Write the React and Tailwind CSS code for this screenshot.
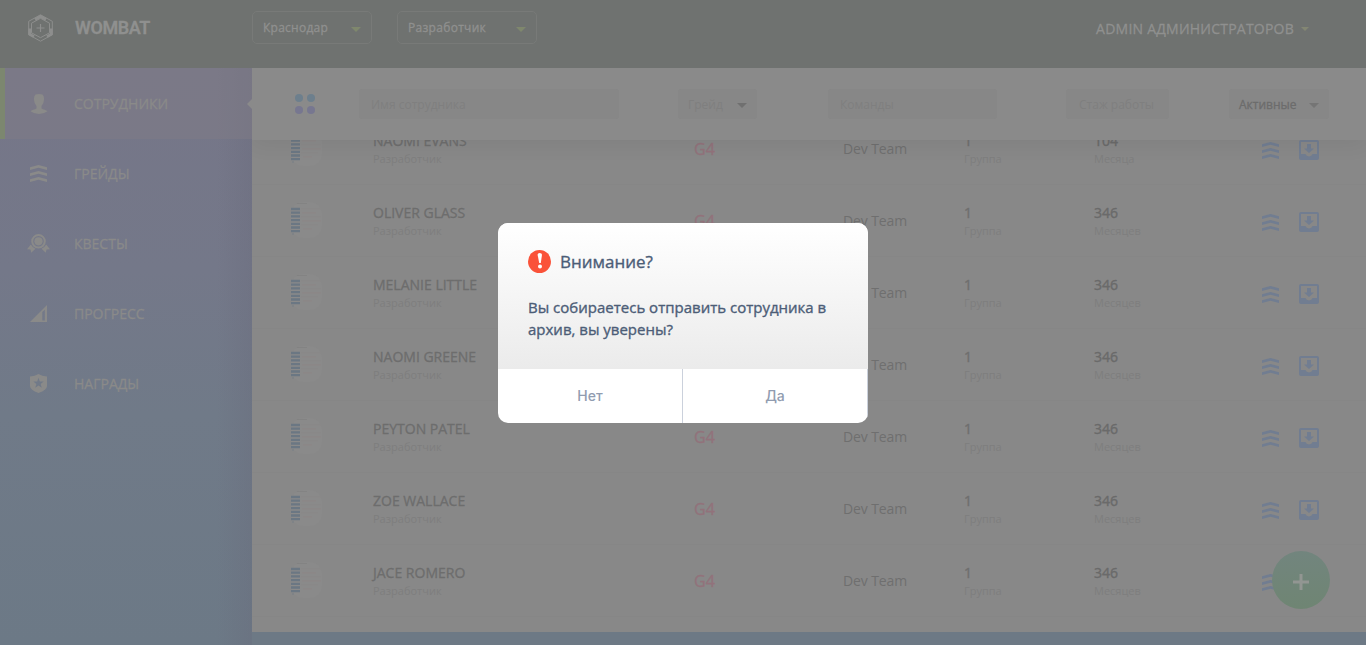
import React from "react";

const people = [
  ["NAOMI EVANS", "104", "Месяца"],
  ["OLIVER GLASS", "346", "Месяцев"],
  ["MELANIE LITTLE", "346", "Месяцев"],
  ["NAOMI GREENE", "346", "Месяцев"],
  ["PEYTON PATEL", "346", "Месяцев"],
  ["ZOE WALLACE", "346", "Месяцев"],
  ["JACE ROMERO", "346", "Месяцев"],
];

const Caret = ({ className }) => (
  <svg viewBox="0 0 10 5" className={className} fill="currentColor"><path d="M0 0h10L5 5z" /></svg>
);

const Chevrons = ({ className }) => (
  <svg width="17" height="17" viewBox="0 0 17 17" className={className} fill="currentColor">
    <path d="M0 2.300 8.500 0 17 2.300V5L8.500 2.700 0 5zM0 8.300 8.500 6 17 8.300V11L8.500 8.700 0 11zM0 14.300 8.500 12l8.500 2.300V17l-8.500-2.300L0 17z" />
  </svg>
);

const Inbox = () => (
  <svg width="20" height="20" viewBox="0 0 20 20" fill="currentColor" fillRule="evenodd">
    <path d="M2 0h16a2 2 0 0 1 2 2v16a2 2 0 0 1-2 2H2a2 2 0 0 1-2-2V2a2 2 0 0 1 2-2zm0 2v12h4.500a3.600 3.200 0 0 0 7 0H18V2zM8 4h4v4.500h3L10 13 5 8.500h3z" />
  </svg>
);

const Logo = () => (
  <svg width="26" height="28" viewBox="0 0 26 28" fill="none" stroke="#8d8e8d">
    <path d="M13.500 .8 25.300 7.300v13.400l-11.800 6.500-11.800-6.500V7.300z" strokeWidth="1" />
    <path d="M13.500 4.300 22.500 9.200v9.600l-9 4.900-9-4.900V9.200z" strokeWidth="1" />
    <path d="M8 5.400 13.500 2.400l5.500 3M2.700 14.500v5.700L7 22.600M24.300 14.500v5.700L20 22.600" strokeWidth="2.800" />
    <path d="M13.500 10v8M9.500 14h8" strokeWidth="1.200" />
  </svg>
);

const Person = () => (
  <svg width="18" height="20" viewBox="0 0 18 20" fill="currentColor">
    <path d="M5.500 0.500Q9-.5 12.500.5 14.300 2 14 5.500q0 4-2.500 6.500v2.500c1.500 1.400 5 1.200 6 2.800Q14 20 9 20T.5 17.300c1-1.600 4.500-1.400 6-2.800V12Q4 9.500 4 5.500 3.700 2 5.500.5z" />
  </svg>
);

const Medal = () => (
  <svg width="23" height="19" viewBox="0 0 23 19" fill="currentColor">
    <path fillRule="evenodd" d="M11.500 0a7.300 7.300 0 1 1 0 14.600 7.300 7.300 0 0 1 0-14.600zm0 2a5.300 5.300 0 1 0 0 10.600 5.300 5.300 0 0 0 0-10.600z" />
    <circle cx="11.500" cy="7.300" r="4.100" />
    <path d="M3.800 10.500 0 15.300l3.500.2.700 3.300 4.300-4Q5.500 13.500 3.800 10.500zM19.200 10.500l3.800 4.800-3.500.2-.7 3.300-4.300-4q3-1.300 4.700-4.300z" />
  </svg>
);

const Progress = () => (
  <svg width="17" height="17" viewBox="0 0 17 17" fill="currentColor" fillRule="evenodd">
    <path d="M0 17 17 0v17zM12.300 7v8.500h2.500V4.800z" />
  </svg>
);

const Shield = () => (
  <svg width="17" height="19" viewBox="0 0 17 19" fill="currentColor" fillRule="evenodd">
    <path d="M8.500 0Q12 2.300 17 2.500V12q0 4-8.500 7Q0 16 0 12V2.500Q5 2.300 8.500 0zm0 3.800L7.200 7.500H3.300l3.100 2.400-1.200 3.900 3.300-2.400 3.300 2.400-1.200-3.900 3.100-2.400H9.800z" />
  </svg>
);

const Avatar = () => (
  <svg width="34" height="38" viewBox="0 0 34 38" className="-mt-px">
    <rect x="0" y="1" width="31" height="36" rx="12" fill="#8a8a8a" />
    <path d="M6 2.500h10" stroke="#808080" strokeWidth=".7" />
    <path d="M10 8h20M10 16h20M10 24h17" stroke="#898787" strokeWidth="1" />
    <path d="M11 12h14M11 20h19M12 28h9" stroke="#8c8585" strokeWidth="1" />
    <path d="M0 8h9M0 11.700h9M0 15.400h9M0 19.100h9M0 22.800h9M0 26.500h9M0 30.200h9" stroke="#6b7783" strokeWidth="2.300" />
    <path d="M1 33h2" stroke="#777f86" strokeWidth="1" />
  </svg>
);

const menu = [
  ["СОТРУДНИКИ", <Person />],
  ["ГРЕЙДЫ", <Chevrons />],
  ["КВЕСТЫ", <Medal />],
  ["ПРОГРЕСС", <Progress />],
  ["НАГРАДЫ", <Shield />],
];

function Header() {
  return (
    <header className="flex h-[68px] shrink-0 items-start bg-[#6f7270] text-[#8f908f] [-webkit-text-stroke:0.3px]">
      <div className="flex w-[252px] items-center pt-[14px] pl-[27px]">
        <Logo />
        <span className="ml-[22px] font-[Roboto] text-[18px] leading-7 font-semibold tracking-[-0.4px]">WOMBAT</span>
      </div>
      <div className="mt-[11px] flex h-[33px] w-[120px] items-center justify-between rounded-[5px] border border-[#787a78] pr-[10px] pl-[10px] text-[12px] tracking-[0.25px]">
        Краснодар<Caret className="mt-1 h-[5px] w-[10px] text-[#7f876d]" />
      </div>
      <div className="mt-[11px] ml-[25px] flex h-[33px] w-[140px] items-center justify-between rounded-[5px] border border-[#787a78] pr-[10px] pl-[10px] text-[12px] tracking-[0.3px]">
        Разработчик<Caret className="mt-1 h-[5px] w-[10px] text-[#7f876d]" />
      </div>
      <div className="mt-[19px] mr-[57px] ml-auto flex items-center text-[14px] leading-5 tracking-[0.23px]">
        ADMIN АДМИНИСТРАТОРОВ<Caret className="ml-[7px] h-1 w-2 text-[#838673]" />
      </div>
    </header>
  );
}

function Sidebar() {
  return (
    <nav className="flex w-[252px] shrink-0 flex-col bg-[linear-gradient(90deg,transparent_86%,#68697a55),linear-gradient(#767688,#747889_35%,#707a88_60%,#6c7986)] text-[#8a8a89]">
      {menu.map(([name, icon], i) => (
        <div
          key={name}
          className={
            i === 0
              ? "-mb-px flex h-[71px] shrink-0 items-center border-l-[5px] border-[#7c876f] bg-[#7f7c8680] pl-[22px]"
              : "flex h-[70px] shrink-0 items-center pl-[27px]"
          }
        >
          <span className="flex w-[23px] justify-center">{icon}</span>
          <span className="ml-6 text-[14px] [-webkit-text-stroke:0.3px]">{name}</span>
          {i === 0 && <svg width="5" height="10" viewBox="0 0 5 10" className="ml-auto"><path d="M5 0v10L0 5z" fill="#8a8a8a" /></svg>}
        </div>
      ))}
    </nav>
  );
}

function Filters() {
  const box = "flex h-[30px] items-center rounded-[3px] bg-[#878787] text-[12px] text-[#7f7f7f]";
  return (
    <div className="relative flex h-[72px] shrink-0 items-center bg-[#8a8a8a] pl-[43px] shadow-[0_4px_20px_#00000010]">
      <div className="grid grid-cols-2 gap-1">
        <i className="size-2 rounded-full bg-[#6d7f8d]" /><i className="size-2 rounded-full bg-[#6d7f8d]" />
        <i className="size-2 rounded-full bg-[#777790]" /><i className="size-2 rounded-full bg-[#777790]" />
      </div>
      <div className={`${box} ml-[44px] w-[260px] pt-0.5 pl-3`}>Имя сотрудника</div>
      <div className={`${box} ml-[59px] w-[79px] justify-between px-[10px] pt-0.5`}>
        Грейд<Caret className="h-[5px] w-[10px] text-[#707070]" />
      </div>
      <div className={`${box} ml-[71px] w-[169px] pt-0.5 pl-3`}>Команды</div>
      <div className={`${box} ml-[69px] w-[103px] pt-0.5 pl-[13px]`}>Стаж работы</div>
      <div className={`${box} ml-[60px] w-[100px] justify-between px-[10px] pt-0.5 text-[#6c6c6c]! [-webkit-text-stroke:0.3px]`}>
        Активные<Caret className="h-[5px] w-[10px] text-[#757575]" />
      </div>
    </div>
  );
}

function Row({ person: [name, months, unit] }) {
  return (
    <div className="grid h-[72px] shrink-0 grid-cols-[82px_321px_149px_121px_130px_168px_37px_30px] items-center border-b border-[#868686] pl-[39px] text-[14px] text-[#6f6f6f]">
      <Avatar />
      <div>
        <div className="leading-5 text-[#6d6d6d] [-webkit-text-stroke:0.3px]">{name}</div>
        <div className="text-[11px] leading-4 text-[#7e7e7e]">Разработчик</div>
      </div>
      <div className="text-[16px] leading-5 text-[#92727b] [-webkit-text-stroke:0.3px]">G4</div>
      <div className="tracking-[-0.1px]">Dev Team</div>
      <div>
        <div className="leading-5 [-webkit-text-stroke:0.4px]">1</div>
        <div className="text-[11px] leading-4 text-[#7e7e7e]">Группа</div>
      </div>
      <div>
        <div className="leading-5 text-[#6a6a6a] [-webkit-text-stroke:0.4px]">{months}</div>
        <div className="text-[11px] leading-4 text-[#7e7e7e]">{unit}</div>
      </div>
      <div className="text-[#717d91]"><Chevrons className="mt-1" /></div>
      <div className="mt-0.5 text-[#717d91]"><Inbox /></div>
    </div>
  );
}

function Dialog() {
  return (
    <div className="absolute top-[223px] left-[498px] flex h-[200px] w-[370px] flex-col overflow-hidden rounded-[10px] bg-white text-[#4c5d77]">
      <div className="h-[146px] bg-linear-to-b from-white to-[#ebebeb] px-[30px] pt-[27px] [-webkit-text-stroke:0.35px]">
        <div className="flex h-[23px] items-center">
          <svg width="23" height="23" viewBox="0 0 23 23">
            <circle cx="11.500" cy="11.500" r="11.500" fill="#fa5239" />
            <path d="M9.600 4.800q0-1.500 2-1.800 2.500 0 2.400 1.800l-1.200 8.100h-1.600z" fill="#fff" />
            <circle cx="12" cy="16.500" r="2" fill="#fff" />
          </svg>
          <span className="ml-[9px] text-[17px]">Внимание?</span>
        </div>
        <p className="mt-[23px] text-[15px] leading-[22px] whitespace-nowrap">
          Вы собираетесь отправить сотрудника в<br />архив, вы уверены?
        </p>
      </div>
      <div className="grid flex-1 grid-cols-2 font-['Inter'] text-[14px] font-medium text-[#919cb0]">
        <button className="border-r border-[#cbd1dc] pb-0.5">Нет</button>
        <button className="border-r border-[#cbd1dc] pb-0.5">Да</button>
      </div>
    </div>
  );
}

export default function App() {
  return (
    <div className="relative flex h-[645px] w-[1366px] flex-col overflow-hidden bg-[#6d7985] font-['Open_Sans','Noto_Sans',sans-serif]">
      <Header />
      <div className="flex min-h-0 flex-1">
        <Sidebar />
        <main className="mb-[13px] flex flex-1 flex-col overflow-hidden bg-[#888888]">
          <Filters />
          <div className="-mt-[27px] flex flex-col">
            {people.map((p) => <Row key={p[0]} person={p} />)}
          </div>
        </main>
      </div>
      <button className="absolute top-[551px] left-[1272px] flex size-[58px] items-center justify-center rounded-full bg-linear-to-b from-[#72857e] to-[#6f8573] pt-1">
        <svg width="16" height="16" viewBox="0 0 16 16" stroke="#929692" strokeWidth="3"><path d="M8 0v16M0 8h16" /></svg>
      </button>
      <Dialog />
    </div>
  );
}
